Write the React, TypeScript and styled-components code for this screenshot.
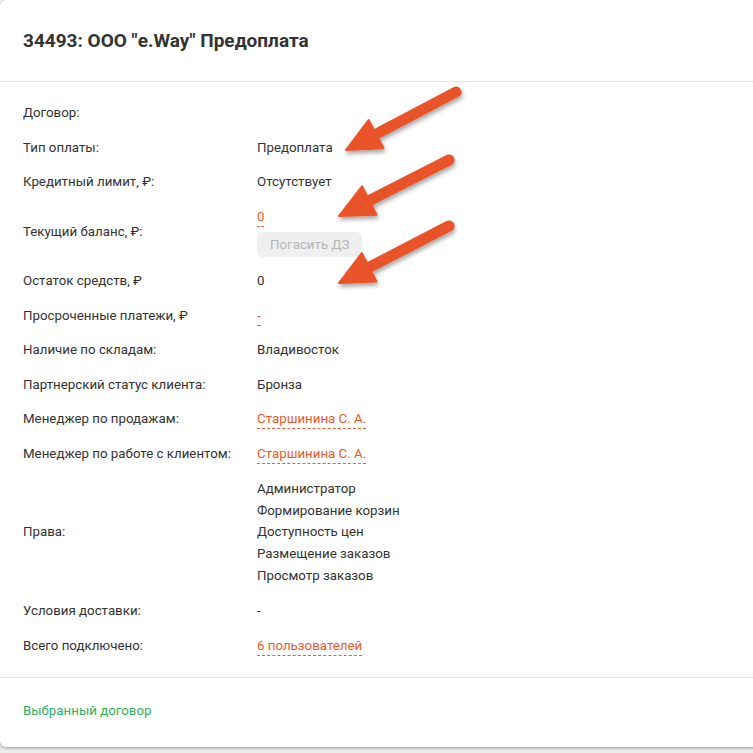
import React from 'react';
import styled, { createGlobalStyle } from 'styled-components';

const GlobalStyle = createGlobalStyle`
  html, body {
    margin: 0;
    padding: 0;
    background: #ececec;
    overflow: hidden;
  }
  body {
    font-family: Roboto, "Noto Sans", Arial, sans-serif;
    color: #333;
  }
`;

type Row = {
  label: string;
  value?: React.ReactNode;
};

const App: React.FC = () => {
  const rows: Row[] = [
    { label: 'Договор:' },
    { label: 'Тип оплаты:', value: 'Предоплата' },
    { label: 'Кредитный лимит, ₽:', value: 'Отсутствует' },
    {
      label: 'Текущий баланс, ₽:',
      value: (
        <BalanceBox>
          <div><S_Link>0</S_Link></div>
          <S_Button disabled>Погасить ДЗ</S_Button>
        </BalanceBox>
      ),
    },
    { label: 'Остаток средств, ₽', value: '0' },
    { label: 'Просроченные платежи, ₽', value: <S_Link>-</S_Link> },
    { label: 'Наличие по складам:', value: 'Владивосток' },
    { label: 'Партнерский статус клиента:', value: 'Бронза' },
    { label: 'Менеджер по продажам:', value: <S_Link>Старшинина С. А.</S_Link> },
    { label: 'Менеджер по работе с клиентом:', value: <S_Link>Старшинина С. А.</S_Link> },
    {
      label: 'Права:',
      value: (
        <RightsList>
          <li>Администратор</li>
          <li>Формирование корзин</li>
          <li>Доступность цен</li>
          <li>Размещение заказов</li>
          <li>Просмотр заказов</li>
        </RightsList>
      ),
    },
    { label: 'Условия доставки:', value: '-' },
    { label: 'Всего подключено:', value: <S_Link>6 пользователей</S_Link> },
  ];

  return (
    <>
      <GlobalStyle />
      <Card>
        <Header>
          <Title>34493: ООО "e.Way" Предоплата</Title>
        </Header>
        <Body>
          {rows.map((r) => (
            <React.Fragment key={r.label}>
              <Label>{r.label}</Label>
              <Value>{r.value}</Value>
            </React.Fragment>
          ))}
        </Body>
        <Footer>
          <FooterLink>Выбранный договор</FooterLink>
        </Footer>
        <Arrows width="753" height="330" viewBox="0 0 753 330">
          <defs>
            <filter id="sh" x="-20%" y="-20%" width="140%" height="160%">
              <feDropShadow dx="1" dy="3" stdDeviation="2" floodColor="#000" floodOpacity="0.35" />
            </filter>
          </defs>
          <Arrow x1={456} y1={92} x2={346} y2={150} />
          <Arrow x1={449} y1={160} x2={339} y2={216} />
          <Arrow x1={449} y1={226} x2={339} y2={283} />
        </Arrows>
      </Card>
    </>
  );
};

const Arrow: React.FC<{ x1: number; y1: number; x2: number; y2: number }> = ({ x1, y1, x2, y2 }) => {
  const dx = x2 - x1;
  const dy = y2 - y1;
  const len = Math.sqrt(dx * dx + dy * dy);
  const ux = dx / len;
  const uy = dy / len;
  const headLen = 34;
  const headHalf = 16;
  const bx = x2 - ux * headLen;
  const by = y2 - uy * headLen;
  const px = -uy;
  const py = ux;
  const head = `${x2},${y2} ${bx + px * headHalf},${by + py * headHalf} ${bx - px * headHalf},${by - py * headHalf}`;
  return (
    <g filter="url(#sh)">
      <line x1={x1} y1={y1} x2={bx + ux * 4} y2={by + uy * 4} stroke="#e8532a" strokeWidth={11} strokeLinecap="round" />
      <polygon points={head} fill="#e8532a" stroke="#e8532a" strokeWidth={2} strokeLinejoin="round" />
    </g>
  );
};

// ------------ Style settings ------------
const Card = styled.div`
  position: relative;
  width: 770px;
  background: #fff;
  border-radius: 6px;
  box-shadow: 0 1px 3px rgba(0, 0, 0, 0.35);
  margin-bottom: 8px;
`;

const Header = styled.div`
  height: 81px;
  display: flex;
  align-items: center;
  padding: 0 23px;
  border-bottom: 1px solid #e3e3e3;
`;

const Title = styled.h1`
  margin: 0;
  font-size: 19px;
  font-weight: 700;
  color: #333;
`;

const Body = styled.div`
  display: grid;
  grid-template-columns: 234px 1fr;
  row-gap: 14.5px;
  align-items: center;
  padding: 21px 23px 21px;
  border-bottom: 1px solid #e3e3e3;
  font-size: 13.3px;
  line-height: 20px;
`;

const Label = styled.div`
  color: #333;
`;

const Value = styled.div`
  color: #333;
  min-height: 20px;
`;

const S_Link = styled.span`
  color: #f05a28;
  border-bottom: 1px dashed #f05a28;
  display: inline-block;
  line-height: 18px;
`;

const BalanceBox = styled.div`
  display: flex;
  flex-direction: column;
  align-items: flex-start;
`;

const S_Button = styled.button`
  margin-top: 5px;
  height: 25px;
  padding: 0 13px;
  border: none;
  border-radius: 6px;
  background: #efefef;
  color: #b5b5b5;
  font-family: inherit;
  font-size: 13.3px;
`;

const RightsList = styled.ul`
  margin: 0;
  padding: 0;
  list-style: none;
  line-height: 21.7px;
`;

const Footer = styled.div`
  padding: 22px 23px 26px;
  line-height: 20px;
`;

const FooterLink = styled.span`
  color: #2db35d;
  font-size: 13.3px;
`;

const Arrows = styled.svg`
  position: absolute;
  left: 0;
  top: 0;
  pointer-events: none;
`;

export default App;
